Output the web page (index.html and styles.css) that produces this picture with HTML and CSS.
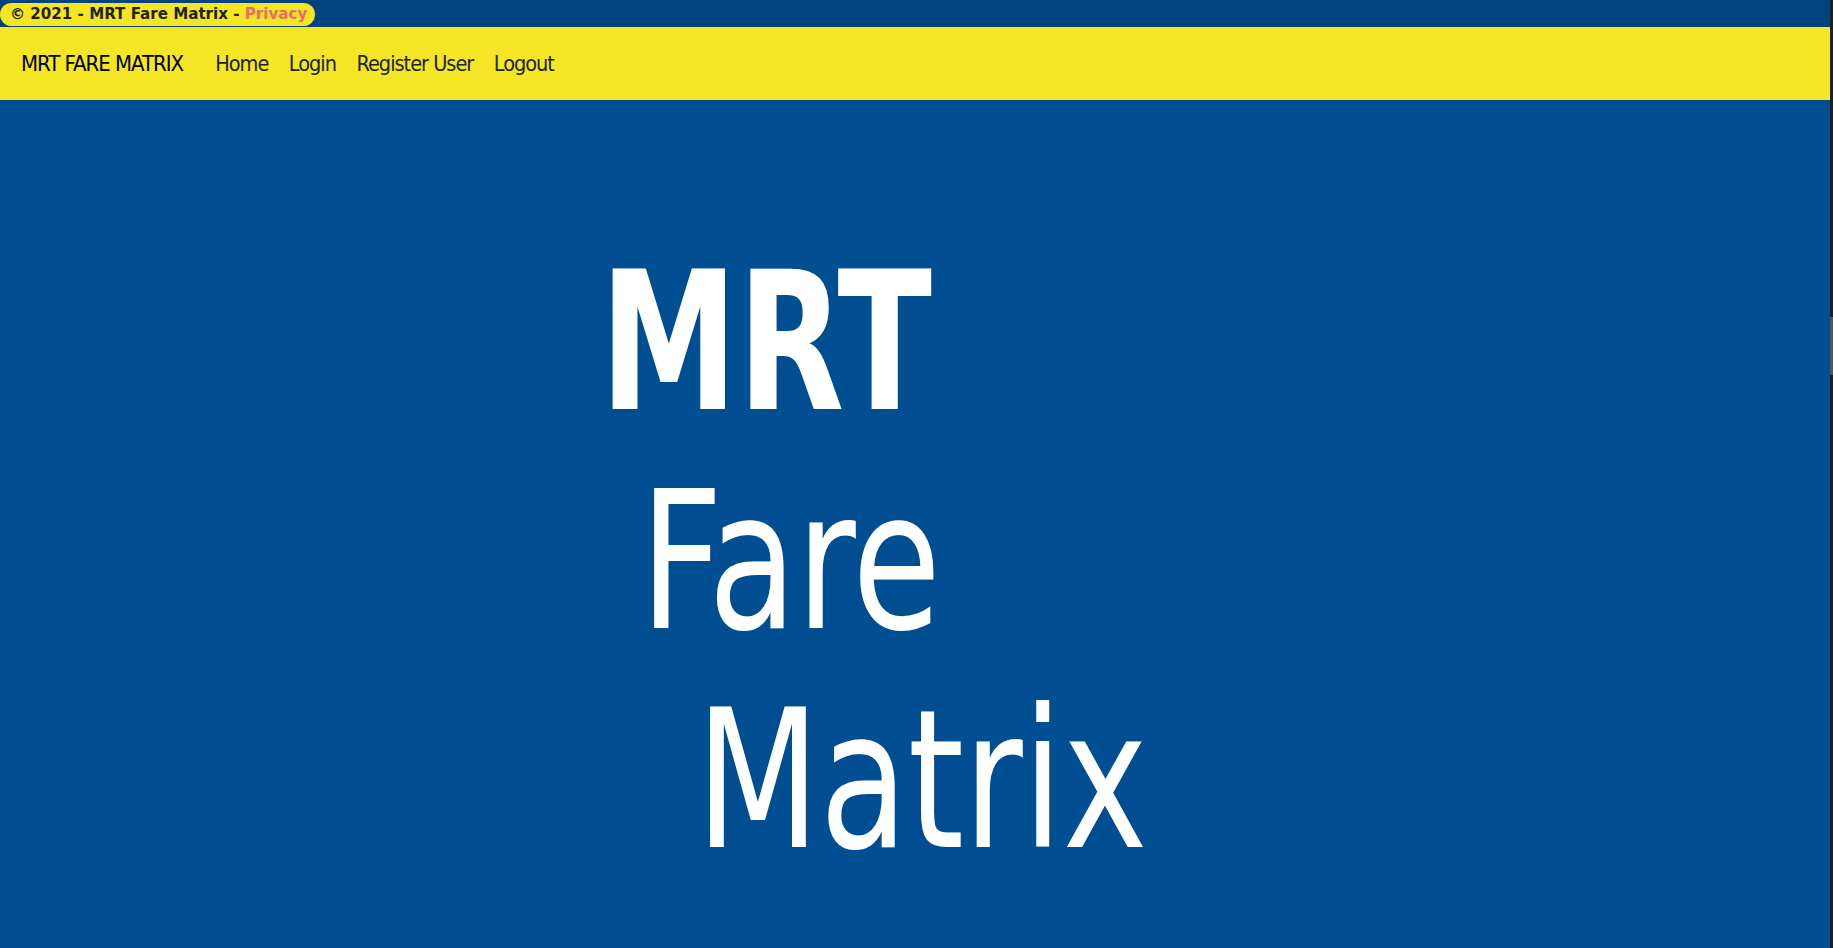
FILE: index.html
```html
<!DOCTYPE html>
<html lang="en">
<head>
<meta charset="utf-8">
<title>MRT Fare Matrix</title>
<link rel="stylesheet" href="styles.css">
</head>
<body>
<footer class="footer">
  <div class="footer-pill">&copy; 2021 - MRT Fare Matrix - <a class="privacy" href="#">Privacy</a></div>
</footer>
<nav class="navbar">
  <a class="brand" href="#">MRT FARE MATRIX</a>
  <ul class="nav-links">
    <li><a href="#">Home</a></li>
    <li><a href="#">Login</a></li>
    <li><a href="#">Register User</a></li>
    <li><a href="#">Logout</a></li>
  </ul>
</nav>
<main class="hero">
  <div class="title">
    <div class="line line-mrt">MRT</div>
    <div class="line line-fare">Fare</div>
    <div class="line line-matrix">Matrix</div>
  </div>
</main>
<div class="scrollbar"><div class="scroll-thumb"></div></div>
</body>
</html>
```
FILE: styles.css
```css
html, body {
  margin: 0;
  padding: 0;
  height: 100%;
  overflow: hidden;
}
body {
  background: #004e92;
  font-family: "DejaVu Sans Condensed", sans-serif;
  display: flex;
  flex-direction: column;
}
.footer {
  flex-shrink: 0;
  background: #01437f;
  height: 27px;
  display: flex;
  align-items: flex-start;
  padding-top: 3px;
  box-sizing: border-box;
}
.footer-pill {
  background: #f5e625;
  border-radius: 12px;
  height: 23px;
  padding: 0 8px 0 10px;
  font-family: "DejaVu Sans", sans-serif;
  font-weight: bold;
  font-size: 15.1px;
  line-height: 23px;
  color: #222;
  white-space: nowrap;
}
.privacy {
  color: #ea6b6b;
  text-decoration: none;
}
.navbar {
  flex-shrink: 0;
  background: #f5e625;
  height: 73px;
  display: flex;
  align-items: center;
  padding-left: 21px;
}
.brand {
  font-size: 22px;
  letter-spacing: -1px;
  color: #000;
  text-decoration: none;
  margin-right: 32px;
}
.nav-links {
  list-style: none;
  margin: 0;
  padding: 0;
  display: flex;
  gap: 20.5px;
}
.nav-links a {
  font-size: 21.5px;
  letter-spacing: -1px;
  color: #222;
  text-decoration: none;
}
.hero {
  flex: 1;
  min-height: 0;
  padding-top: 133px;
  padding-left: 600px;
}
.title {
  color: #fff;
  font-size: 193px;
  line-height: 219px;
}
.line {
  height: 219px;
  white-space: nowrap;
  transform-origin: left center;
}
.line-mrt {
  font-weight: bold;
  transform: scaleX(0.797);
}
.line-fare {
  margin-left: 40px;
  transform: scaleX(0.83);
}
.line-matrix {
  margin-left: 96px;
  transform: scaleX(0.826);
}
.scrollbar {
  position: fixed;
  top: 0;
  right: 0;
  width: 3px;
  height: 100%;
  background: #1e1e1e;
}
.scroll-thumb {
  margin-top: 317px;
  height: 58px;
  background: #555;
}
```
